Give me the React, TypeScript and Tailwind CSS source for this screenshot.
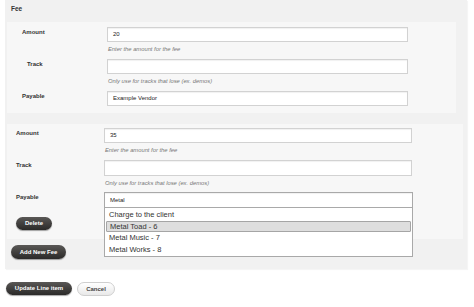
import React from "react";

type Row = { label: string; value: string; help?: string; labelClass?: string };

const darkBtn =
    "flex items-center justify-center rounded-full bg-gradient-to-b from-[#5a5856] to-[#2b2a29] text-white text-[6px] font-bold shadow-[0_1px_1px_rgba(0,0,0,0.35)]";

function FeeRow({ row, labelW, inputW, h, inputH, children }: { row: Row; labelW: string; inputW: string; h: string; inputH: string; children?: React.ReactNode }) {
    return (
        <div className={`flex ${h}`}>
            <div className={`${labelW} shrink-0 text-[6px] font-bold leading-[8px] pt-[1px] text-[#333] ${row.labelClass ?? ""}`}>{row.label}</div>
            <div className={`${inputW} flex flex-col`}>
                <div className="relative">
                    <div className={`${inputH} w-full border border-[#d2d2d2] bg-white shadow-[inset_0_1px_1px_rgba(0,0,0,0.06)] flex items-center px-[5px] text-[6px] text-[#222]`}>
                        {row.value}
                    </div>
                    {children}
                </div>
                {row.help && <div className="text-[5.8px] italic text-[#777] leading-[7px] mt-[4px] ml-[1px]">{row.help}</div>}
            </div>
        </div>
    );
}

export default function App() {
    const first: Row[] = [
        { label: "Amount", value: "20", help: "Enter the amount for the fee" },
        { label: "Track", value: "", help: "Only use for tracks that lose (ex. demos)", labelClass: "pl-[5px]" },
        { label: "Payable", value: "Example Vendor" },
    ];
    const second: Row[] = [
        { label: "Amount", value: "35", help: "Enter the amount for the fee" },
        { label: "Track", value: "", help: "Only use for tracks that lose (ex. demos)" },
        { label: "Payable", value: "Metal" },
    ];
    const options = ["Charge to the client", "Metal Toad - 6", "Metal Music - 7", "Metal Works - 8"];

    return (
        <div className="w-[474px] h-[307px] bg-white font-['Liberation_Sans',Arial,sans-serif] overflow-hidden">
            <div className="ml-[5px] w-[462px] bg-[#f1f1f1] shadow-[1px_1px_1px_rgba(0,0,0,0.04)] pl-[2px] pb-[10px]">
                <div className="h-[22px] pt-[5px] pl-[4px] text-[6.5px] font-bold text-[#333] leading-[8px]">Fee</div>

                <div className="w-[449px] bg-[#f7f7f7] pt-[5px] pl-[15px] pb-[7px]">
                    <FeeRow row={first[0]} labelW="w-[85px]" inputW="w-[301px]" h="h-[32px]" inputH="h-[15px]" />
                    <FeeRow row={first[1]} labelW="w-[85px]" inputW="w-[301px]" h="h-[32px]" inputH="h-[15px]" />
                    <FeeRow row={first[2]} labelW="w-[85px]" inputW="w-[301px]" h="h-[15px]" inputH="h-[15px]" />
                </div>

                <div className="mt-[11px] w-[456px] bg-[#f7f7f7] pt-[4px] pl-[9px] pb-[9px]">
                    <FeeRow row={second[0]} labelW="w-[88px]" inputW="w-[308px]" h="h-[32px]" inputH="h-[15px]" />
                    <FeeRow row={second[1]} labelW="w-[88px]" inputW="w-[308px]" h="h-[32px]" inputH="h-[16px]" />
                    <FeeRow row={second[2]} labelW="w-[88px]" inputW="w-[309px]" h="h-[16px]" inputH="h-[16px] !border-[#a9a9a9]">
                        <div className="absolute left-0 top-full w-full h-[49px] z-10 border border-t-0 border-[#a9a9a9] bg-white pt-[1px] px-[1px] text-[7.5px] text-[#333]">
                            {options.map((o, i) => (
                                <div
                                    key={o}
                                    className={`h-[11.5px] flex items-center pl-[3px] leading-none ${i === 1 ? "bg-[#dedede] border border-[#a5a5a5] rounded-[1px]" : ""}`}
                                >
                                    {o}
                                </div>
                            ))}
                        </div>
                    </FeeRow>
                    <div className={`${darkBtn} mt-[9px] w-[36px] h-[13px]`}>Delete</div>
                </div>

                <div className={`${darkBtn} mt-[6px] ml-[4px] w-[55px] h-[14px]`}>Add New Fee</div>
            </div>

            <div className="mt-[13px] ml-[6px] flex gap-[5px]">
                <div className={`${darkBtn} w-[66px] h-[13px]`}>Update Line item</div>
                <div className="flex items-center justify-center w-[38px] h-[14px] rounded-full border border-[#cfcfcf] bg-gradient-to-b from-white to-[#e9e9e9] text-[6px] font-bold text-[#444]">
                    Cancel
                </div>
            </div>
        </div>
    );
}
